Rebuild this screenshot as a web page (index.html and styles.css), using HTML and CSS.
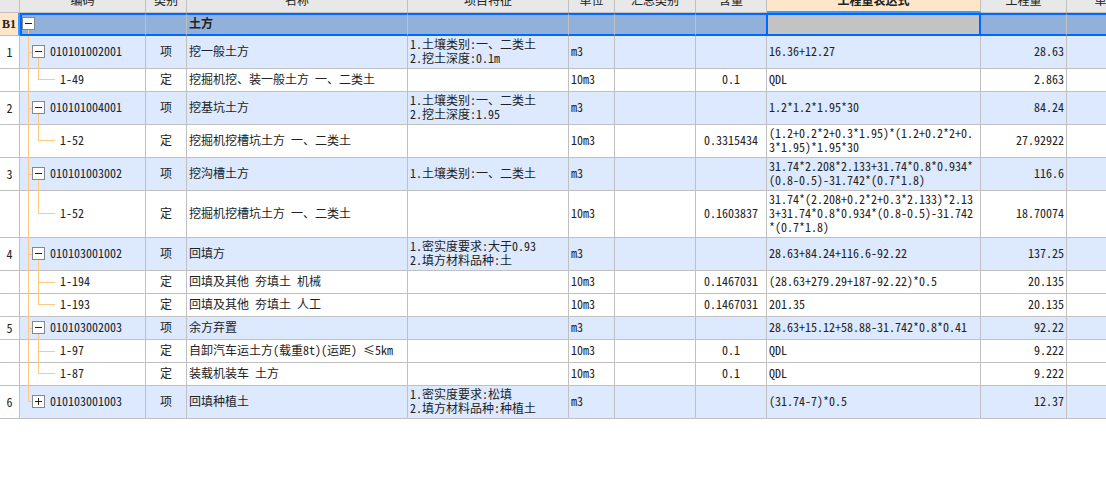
FILE: index.html
```html
<!DOCTYPE html>
<html lang="zh-CN">
<head>
<meta charset="utf-8">
<title>工程量清单</title>
<link rel="stylesheet" href="styles.css">
</head>
<body>
<main class="sheet">
<table class="grid">
<colgroup><col class="c-no"><col class="c-code"><col class="c-kind"><col class="c-name"><col class="c-feature"><col class="c-unit"><col class="c-group"><col class="c-content"><col class="c-expr"><col class="c-qty"><col></colgroup>
<thead>
<tr><th></th><th><div>编码</div></th><th><div>类别</div></th><th><div>名称</div></th><th><div>项目特征</div></th><th><div>单位</div></th><th><div>汇总类别</div></th><th><div>含量</div></th><th class="active"><div>工程量表达式</div></th><th><div>工程量</div></th><th><div>单价</div></th></tr>
</thead>
<tbody>
<tr class="section"><td class="no">B1</td><td class="tree root"><button class="toggle" type="button" aria-label="收起"></button></td><td></td><td>土方</td><td></td><td></td><td></td><td class="before"></td><td class="selected"></td><td></td><td></td></tr>
<tr class="item"><td class="no">1</td><td class="tree open"><button class="toggle" type="button" aria-label="收起"></button>010101002001</td><td class="kind">项</td><td>挖一般土方</td><td>1.土壤类别:一、二类土<br>2.挖土深度:0.1m</td><td>m3</td><td></td><td class="mid"></td><td class="expr">16.36+12.27</td><td class="num">28.63</td><td></td></tr>
<tr><td class="no"></td><td class="tree leaf last">1-49</td><td class="kind">定</td><td>挖掘机挖、装一般土方 一、二类土</td><td></td><td>10m3</td><td></td><td class="mid">0.1</td><td class="expr">QDL</td><td class="num">2.863</td><td></td></tr>
<tr class="item"><td class="no">2</td><td class="tree open"><button class="toggle" type="button" aria-label="收起"></button>010101004001</td><td class="kind">项</td><td>挖基坑土方</td><td>1.土壤类别:一、二类土<br>2.挖土深度:1.95</td><td>m3</td><td></td><td class="mid"></td><td class="expr">1.2*1.2*1.95*30</td><td class="num">84.24</td><td></td></tr>
<tr><td class="no"></td><td class="tree leaf last">1-52</td><td class="kind">定</td><td>挖掘机挖槽坑土方 一、二类土</td><td></td><td>10m3</td><td></td><td class="mid">0.3315434</td><td class="expr">(1.2+0.2*2+0.3*1.95)*(1.2+0.2*2+0.3*1.95)*1.95*30</td><td class="num">27.92922</td><td></td></tr>
<tr class="item"><td class="no">3</td><td class="tree open"><button class="toggle" type="button" aria-label="收起"></button>010101003002</td><td class="kind">项</td><td>挖沟槽土方</td><td>1.土壤类别:一、二类土</td><td>m3</td><td></td><td class="mid"></td><td class="expr">31.74*2.208*2.133+31.74*0.8*0.934*(0.8-0.5)-31.742*(0.7*1.8)</td><td class="num">116.6</td><td></td></tr>
<tr><td class="no"></td><td class="tree leaf last">1-52</td><td class="kind">定</td><td>挖掘机挖槽坑土方 一、二类土</td><td></td><td>10m3</td><td></td><td class="mid">0.1603837</td><td class="expr">31.74*(2.208+0.2*2+0.3*2.133)*2.133+31.74*0.8*0.934*(0.8-0.5)-31.742*(0.7*1.8)</td><td class="num">18.70074</td><td></td></tr>
<tr class="item"><td class="no">4</td><td class="tree open"><button class="toggle" type="button" aria-label="收起"></button>010103001002</td><td class="kind">项</td><td>回填方</td><td>1.密实度要求:大于0.93<br>2.填方材料品种:土</td><td>m3</td><td></td><td class="mid"></td><td class="expr">28.63+84.24+116.6-92.22</td><td class="num">137.25</td><td></td></tr>
<tr><td class="no"></td><td class="tree leaf">1-194</td><td class="kind">定</td><td>回填及其他 夯填土 机械</td><td></td><td>10m3</td><td></td><td class="mid">0.1467031</td><td class="expr">(28.63+279.29+187-92.22)*0.5</td><td class="num">20.135</td><td></td></tr>
<tr><td class="no"></td><td class="tree leaf last">1-193</td><td class="kind">定</td><td>回填及其他 夯填土 人工</td><td></td><td>10m3</td><td></td><td class="mid">0.1467031</td><td class="expr">201.35</td><td class="num">20.135</td><td></td></tr>
<tr class="item"><td class="no">5</td><td class="tree open"><button class="toggle" type="button" aria-label="收起"></button>010103002003</td><td class="kind">项</td><td>余方弃置</td><td></td><td>m3</td><td></td><td class="mid"></td><td class="expr">28.63+15.12+58.88-31.742*0.8*0.41</td><td class="num">92.22</td><td></td></tr>
<tr><td class="no"></td><td class="tree leaf">1-97</td><td class="kind">定</td><td>自卸汽车运土方(载重8t)(运距) ≤5km</td><td></td><td>10m3</td><td></td><td class="mid">0.1</td><td class="expr">QDL</td><td class="num">9.222</td><td></td></tr>
<tr><td class="no"></td><td class="tree leaf last">1-87</td><td class="kind">定</td><td>装载机装车 土方</td><td></td><td>10m3</td><td></td><td class="mid">0.1</td><td class="expr">QDL</td><td class="num">9.222</td><td></td></tr>
<tr class="item"><td class="no">6</td><td class="tree end"><button class="toggle plus" type="button" aria-label="展开"></button>010103001003</td><td class="kind">项</td><td>回填种植土</td><td>1.密实度要求:松填<br>2.填方材料品种:种植土</td><td>m3</td><td></td><td class="mid"></td><td class="expr">(31.74-7)*0.5</td><td class="num">12.37</td><td></td></tr>
</tbody>
</table>
</main>
</body>
</html>
```
FILE: styles.css
```css
:root {
  --line: #c0c0c0;
  --branch: #ffc880;
  --frame: #0068ff;
  --accent: #3c96ff;
}

body {
  margin: 0;
  background: #fff;
  color: #222;
  font: 12px/14px "Noto Sans Mono CJK SC", "Noto Sans CJK SC", monospace;
}

.sheet { overflow: hidden; }

.grid {
  width: 100%;
  min-width: 1147px;
  table-layout: fixed;
  border-collapse: separate;
  border-spacing: 0;
}

.c-no { width: 20px; }
.c-code { width: 126px; }
.c-kind { width: 41px; }
.c-name { width: 221px; }
.c-feature { width: 161px; }
.c-unit { width: 46px; }
.c-group { width: 81px; }
.c-content { width: 71px; }
.c-expr { width: 214px; }
.c-qty { width: 86px; }

th,
td {
  box-sizing: border-box;
  border: 0 solid var(--line);
  border-width: 0 1px 1px 0;
}

/* The header row is scrolled partly out of view. */
th {
  height: 13px;
  padding: 0;
  background: #e8e8e8;
  font-weight: 400;
}

th div {
  display: flex;
  align-items: flex-end;
  justify-content: center;
  height: 7px;
  margin-bottom: 5px;
  overflow: hidden;
  white-space: nowrap;
}

th.active {
  background: #ffe6c8;
  border-bottom: 2px solid var(--accent);
  font-weight: 700;
}

th.active div { margin-bottom: 4px; }

td {
  height: 23px;
  padding: 1px 0 3px 2px;
  vertical-align: middle;
  white-space: nowrap;
}

.kind,
.mid { padding-left: 0; text-align: center; }

.no { padding: 2px 0; text-align: center; }

.num { padding-right: 2px; text-align: right; }

.expr {
  padding-right: 4px;
  white-space: normal;
  line-break: anywhere;
}

.item td { background: #dce9ff; }
.item .no { background: #fff; }

.section td {
  padding: 0 0 3px 2px;
  background: #91b1da;
  border-top: 2px solid var(--frame);
  border-bottom: 2px solid var(--frame);
  font-weight: 700;
}

.section .no {
  padding: 0;
  background: #ffe6c8;
  border-top: 0;
  border-right: 2px solid var(--accent);
  border-bottom: 1px solid var(--line);
  font-family: "Liberation Serif", serif;
}

.section .root { padding-left: 0; border-left: 2px solid var(--frame); }
.section .before { border-right-color: var(--frame); }

.section .selected {
  background: #c3c3c3;
  border-left: 1px solid var(--frame);
  border-right: 2px solid var(--frame);
}

.toggle {
  display: inline-block;
  box-sizing: border-box;
  position: relative;
  z-index: 1;
  width: 13px;
  height: 13px;
  margin: 1px 5px 0 0;
  padding: 0;
  border: 1px solid #888;
  border-radius: 0;
  background: linear-gradient(#222, #222) center / 7px 1px no-repeat #fff;
  vertical-align: top;
}

.toggle.plus {
  background:
    linear-gradient(#222, #222) center / 7px 1px no-repeat,
    linear-gradient(#222, #222) center / 1px 7px no-repeat,
    #fff;
}

.tree { position: relative; padding-left: 12px; }
.leaf { padding-left: 40px; }

/* Trunk line of the tree, drawn through every row. */
.tree::before {
  content: "";
  position: absolute;
  top: 0;
  bottom: -1px;
  left: 8px;
  width: 4px;
  background:
    linear-gradient(var(--branch), var(--branch)) 0 0 / 1px 100% no-repeat,
    linear-gradient(var(--branch), var(--branch)) 0 50% / 4px 1px no-repeat;
}

.leaf::before { width: 1px; }
.root::before { top: 50%; bottom: 0; left: 6px; width: 1px; }
.end::before { bottom: 50%; border-bottom: 1px solid var(--branch); background-size: 1px 100%, 0 0; }

/* Second-level branch lines. */
.open::after,
.leaf::after {
  content: "";
  position: absolute;
  left: 18px;
}

.open::after {
  top: 50%;
  bottom: -1px;
  width: 1px;
  background: var(--branch);
}

.leaf::after {
  top: 0;
  bottom: -1px;
  width: 17px;
  background:
    linear-gradient(var(--branch), var(--branch)) 0 0 / 1px 100% no-repeat,
    linear-gradient(var(--branch), var(--branch)) 0 50% / 17px 1px no-repeat;
}

.last::after {
  bottom: 50%;
  border-bottom: 1px solid var(--branch);
  background-size: 1px 100%, 0 0;
}
```
